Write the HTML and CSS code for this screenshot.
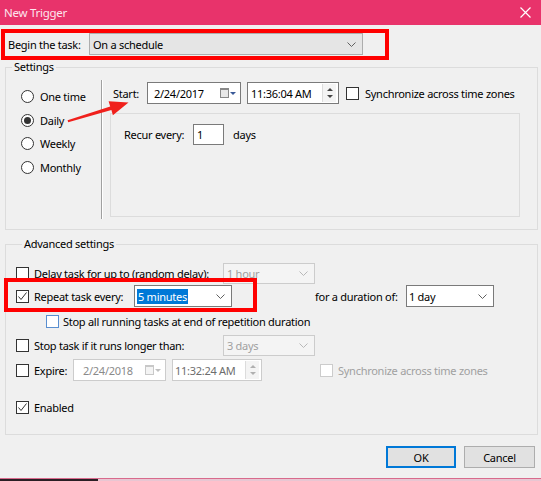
FILE: index.html
```html
<!DOCTYPE html>
<html>
<head>
<meta charset="utf-8">
<title>New Trigger</title>
<link rel="stylesheet" href="styles.css">
</head>
<body>
<div class="window">
  <div class="titlebar">
    <span class="title">New Trigger</span>
    <svg class="close" width="11" height="11" viewBox="0 0 11 11"><path d="M0.5 0.5 L10.5 10.5 M10.5 0.5 L0.5 10.5" stroke="#fff" stroke-width="1.2" fill="none"/></svg>
  </div>
  <div class="content">
    <div class="begin-row">
      <span class="begin-label">Begin the task:</span>
      <div class="combo combo-gray begin-combo">
        <span class="combo-text">On a schedule</span>
        <svg class="chev" width="9" height="5" viewBox="0 0 9 5"><path d="M0.5 0.5 L4.5 4.5 L8.5 0.5" stroke="#606060" fill="none"/></svg>
      </div>
    </div>

    <fieldset class="group settings">
      <legend>Settings</legend>
      <div class="settings-inner">
        <div class="radios">
          <div class="radio-row"><span class="radio"></span><span>One time</span></div>
          <div class="radio-row"><span class="radio on"></span><span>Daily</span></div>
          <div class="radio-row"><span class="radio"></span><span>Weekly</span></div>
          <div class="radio-row"><span class="radio"></span><span>Monthly</span></div>
        </div>
        <div class="vsep"></div>
        <div class="schedule">
          <div class="start-row">
            <span class="start-label">Start:</span>
            <div class="field date-field">
              <span>2/24/2017</span>
              <span class="cal"><span class="cal-box"></span><span class="tri"></span></span>
            </div>
            <div class="field time-field">
              <span>11:36:04 AM</span>
              <span class="spin"><span class="up"></span><span class="dn"></span></span>
            </div>
            <span class="check"></span>
            <span class="sync-label">Synchronize across time zones</span>
          </div>
          <div class="recur-box">
            <div class="recur-row">
              <span class="recur-label">Recur every:</span>
              <div class="field recur-field">1</div>
              <span class="days">days</span>
            </div>
          </div>
        </div>
      </div>
    </fieldset>

    <fieldset class="group advanced">
      <legend>Advanced settings</legend>
      <div class="adv-row r-delay">
        <span class="check"></span>
        <span class="adv-label w189">Delay task for up to (random delay):</span>
        <div class="combo combo-disabled w92">
          <span class="combo-text">1 hour</span>
          <svg class="chev" width="9" height="5" viewBox="0 0 9 5"><path d="M0.5 0.5 L4.5 4.5 L8.5 0.5" stroke="#b8b8b8" fill="none"/></svg>
        </div>
      </div>
      <div class="adv-row r-repeat">
        <span class="check checked"><svg width="11" height="11" viewBox="0 0 11 11"><path d="M1.5 5.5 L4 8.5 L9.5 1.5" stroke="#333" stroke-width="1" fill="none"/></svg></span>
        <span class="adv-label w100">Repeat task every:</span>
        <div class="combo combo-white w98">
          <span class="combo-text"><span class="sel">5 minutes</span></span>
          <svg class="chev" width="9" height="5" viewBox="0 0 9 5"><path d="M0.5 0.5 L4.5 4.5 L8.5 0.5" stroke="#606060" fill="none"/></svg>
        </div>
        <span class="dur-label">for a duration of:</span>
        <div class="combo combo-white w88">
          <span class="combo-text">1 day</span>
          <svg class="chev" width="9" height="5" viewBox="0 0 9 5"><path d="M0.5 0.5 L4.5 4.5 L8.5 0.5" stroke="#606060" fill="none"/></svg>
        </div>
      </div>
      <div class="adv-row r-stopall">
        <span class="check blue"></span>
        <span class="stopall-label">Stop all running tasks at end of repetition duration</span>
      </div>
      <div class="adv-row r-stop">
        <span class="check"></span>
        <span class="adv-label w189">Stop task if it runs longer than:</span>
        <div class="combo combo-disabled w92">
          <span class="combo-text">3 days</span>
          <svg class="chev" width="9" height="5" viewBox="0 0 9 5"><path d="M0.5 0.5 L4.5 4.5 L8.5 0.5" stroke="#b8b8b8" fill="none"/></svg>
        </div>
      </div>
      <div class="adv-row r-expire">
        <span class="check"></span>
        <span class="adv-label w39">Expire:</span>
        <div class="field field-disabled exp-date">
          <span class="dis-text">2/24/2018</span>
          <span class="cal dis"><span class="cal-box"></span><span class="tri"></span></span>
        </div>
        <div class="field field-disabled exp-time">
          <span class="dis-text2">11:32:24 AM</span>
          <span class="spin dis"><span class="up"></span><span class="dn"></span></span>
        </div>
        <span class="check disabled exp-sync"></span>
        <span class="dis-label">Synchronize across time zones</span>
      </div>
      <div class="adv-row r-enabled">
        <span class="check checked"><svg width="11" height="11" viewBox="0 0 11 11"><path d="M1.5 5.5 L4 8.5 L9.5 1.5" stroke="#333" stroke-width="1" fill="none"/></svg></span>
        <span class="adv-label">Enabled</span>
      </div>
    </fieldset>

    <div class="buttons">
      <div class="btn btn-default">OK</div>
      <div class="btn">Cancel</div>
    </div>
  </div>
  <div class="taskbar"><span class="tb-dark"></span></div>

  <div class="redbox rb-begin"></div>
  <div class="redbox rb-repeat"></div>
  <svg class="arrow" width="541" height="481" viewBox="0 0 541 481">
    <polygon points="67.6,120.2 110.2,106.6 108.6,101.2 128.5,102.6 112.9,115.2 111.4,110.1 68.2,122.2" fill="#f0201c"/>
  </svg>
</div>
</body>
</html>
```
FILE: styles.css
```css
* { box-sizing: border-box; }
html, body { margin: 0; padding: 0; }
body {
  width: 541px;
  height: 481px;
  overflow: hidden;
  background: #f0f0f0;
  font-family: "Noto Sans", "Open Sans", sans-serif;
  font-size: 11px;
  letter-spacing: -0.27px;
  color: #000;
}
.window {
  position: relative;
  display: flex;
  flex-direction: column;
  height: 481px;
}
.titlebar {
  height: 25px;
  flex: none;
  background: #e8336b;
  display: flex;
  align-items: center;
  justify-content: space-between;
  padding: 0 10px 1px 4px;
  color: #fff;
  font-size: 11.5px;
}
.title { color: #fde6ee; }
.close { display: block; margin-top: 1px; }

.content {
  flex: 1;
  padding: 8px 3px 0 5px;
  display: flex;
  flex-direction: column;
}

/* begin row */
.begin-row {
  display: flex;
  align-items: center;
  height: 22px;
  padding-left: 3px;
}
.begin-label { width: 81px; }
.combo {
  display: flex;
  align-items: center;
  justify-content: space-between;
  height: 22px;
  border: 1px solid #adadad;
  padding: 0 6px 0 3px;
}
.combo-gray { background: #e5e5e5; }
.begin-combo { width: 274px; }
.chev { display: block; }

/* groups */
.group {
  margin: 0;
  padding: 0;
  border: 1px solid #dcdcdc;
  min-width: 0;
}
.group legend {
  margin-left: 6px;
  padding: 0 2px;
  line-height: 16px;
  font-size: 11px;
}
.settings { margin-top: 4px; height: 171px; }
.settings-inner {
  display: flex;
  padding-top: 5px;
}
.radios {
  width: 95px;
  padding-top: 5px;
  padding-left: 15px;
}
.radio-row {
  display: flex;
  align-items: center;
  height: 23.5px;
}
.radio {
  width: 13px;
  height: 13px;
  border: 1px solid #333;
  border-radius: 50%;
  background: #fff;
  margin-right: 6px;
  display: flex;
  align-items: center;
  justify-content: center;
}
.radio.on::after {
  content: "";
  width: 7px;
  height: 7px;
  border-radius: 50%;
  background: #333;
}
.vsep {
  width: 2px;
  height: 139px;
  border-left: 1px solid #a0a0a0;
  border-right: 1px solid #fff;
}
.schedule { flex: 1; }
.start-row {
  display: flex;
  align-items: center;
  margin-top: 2px;
  height: 22px;
  padding-left: 10px;
}
.start-label { width: 34px; }
.field {
  display: flex;
  align-items: center;
  justify-content: space-between;
  height: 22px;
  border: 1px solid #7a7a7a;
  background: #fff;
  padding: 0 2px 0 4px;
}
.date-field { width: 94px; padding-left: 6px; }
.time-field { width: 92px; margin-left: 6px; padding-left: 3px; }
.cal { display: flex; align-items: center; gap: 1px; }
.cal-box {
  width: 9px;
  height: 10px;
  border: 1px solid #888;
  background: #e8e8e8;
  border-top-width: 2px;
}
.tri {
  width: 0;
  height: 0;
  border-left: 3px solid transparent;
  border-right: 3px solid transparent;
  border-top: 3px solid #3a5a98;
  margin-right: 2px;
}
.cal.dis .cal-box { border-color: #c8c8c8; background: #f4f4f4; }
.cal.dis .tri { border-top-color: #c0c0c0; }
.spin {
  width: 14px;
  height: 18px;
  border-left: 1px solid #dcdcdc;
  display: flex;
  flex-direction: column;
  align-items: center;
  justify-content: center;
  gap: 4px;
  background: #f4f4f4;
}
.spin .up {
  width: 0; height: 0;
  border-left: 3px solid transparent;
  border-right: 3px solid transparent;
  border-bottom: 3px solid #444;
}
.spin .dn {
  width: 0; height: 0;
  border-left: 3px solid transparent;
  border-right: 3px solid transparent;
  border-top: 3px solid #444;
}
.spin.dis .up { border-bottom-color: #b0b0b0; }
.spin.dis .dn { border-top-color: #b0b0b0; }
.check {
  flex: none;
  width: 13px;
  height: 13px;
  border: 1px solid #333;
  background: #fff;
  display: flex;
  align-items: center;
  justify-content: center;
}
.check svg { display: block; }
.check.blue { border-color: #5a8fd0; }
.check.disabled { border-color: #cccccc; }
.start-row .check { margin-left: 7px; margin-right: 6px; }
.recur-box {
  margin: 9px 0 0 7px;
  width: 410px;
  height: 104px;
  border: 1px solid #dcdcdc;
}
.recur-row {
  display: flex;
  align-items: center;
  margin-top: 10px;
  padding-left: 13px;
  height: 21px;
}
.recur-label { width: 69px; }
.recur-field { width: 31px; height: 21px; padding-left: 3px; justify-content: flex-start; }
.days { margin-left: 9px; }

/* advanced */
.advanced { margin-top: 6px; height: 199px; padding: 0 0 0 10px; }
.adv-row {
  display: flex;
  align-items: center;
  height: 22px;
}
.adv-row > .check { margin-right: 5px; }
.adv-label { white-space: nowrap; }
.w189 { width: 189px; }
.w100 { width: 100px; }
.w39 { width: 39px; }
.w92 { width: 92px; }
.w98 { width: 98px; }
.w88 { width: 88px; }
.r-delay { margin-top: 10px; }
.r-repeat { margin-top: 1px; }
.r-stopall { margin-top: 3px; padding-left: 30px; }
.r-stopall > .check { margin-right: 4px; }
.r-stop { margin-top: 2px; }
.r-expire { margin-top: 3px; }
.r-enabled { margin-top: 15px; }
.combo-disabled {
  background: #f4f4f4;
  border-color: #cccccc;
  color: #a0a0a0;
  height: 21px;
}
.combo-white {
  background: #fff;
  border-color: #7a7a7a;
  padding-left: 2px;
}
.sel { background: #0078d7; color: #fff; padding: 0 1px; }
.dur-label { margin-left: 83px; width: 91px; white-space: nowrap; }
.field-disabled { border-color: #cccccc; }
.exp-date { width: 93px; padding-left: 9px; }
.exp-time { width: 90px; margin-left: 6px; padding-left: 2px; }
.dis-text { color: #8a8a8a; }
.dis-text2 { color: #6d6d6d; }
.exp-sync { margin-left: 58px; margin-right: 6px; }
.dis-label { color: #a0a0a0; }

/* buttons */
.buttons {
  display: flex;
  justify-content: flex-end;
  gap: 8px;
  margin-top: 11px;
  padding-right: 3px;
}
.btn {
  width: 71px;
  height: 22px;
  border: 1px solid #adadad;
  background: #e1e1e1;
  display: flex;
  align-items: center;
  justify-content: center;
}
.btn-default { width: 70px; border: 2px solid #0078d7; }

.taskbar {
  margin-top: auto;
  height: 3px;
  flex: none;
  border-top: 1px solid #d86a8c;
  background: #e8c6d2;
}
.tb-dark { display: block; width: 98px; height: 2px; background: #2a1e24; }

/* annotations */
.redbox {
  position: absolute;
  border: 4px solid #ff0000;
}
.rb-begin { left: 1px; top: 29px; width: 388px; height: 31px; }
.rb-repeat { left: 4px; top: 278px; width: 253px; height: 34px; }
.arrow { position: absolute; left: 0; top: 0; pointer-events: none; }
```
